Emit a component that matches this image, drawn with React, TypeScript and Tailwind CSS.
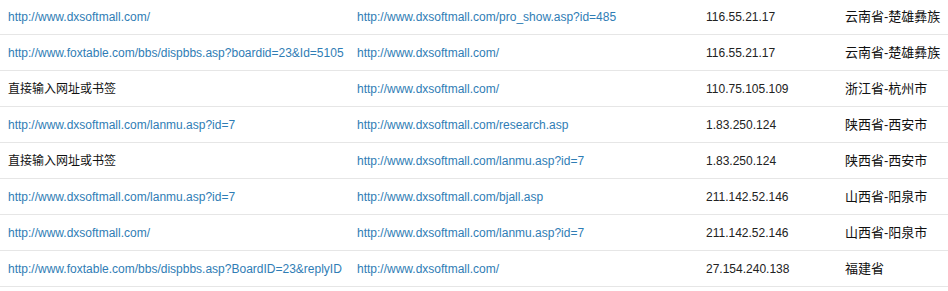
const rows = [
  { from: 'http://www.dxsoftmall.com/', to: 'http://www.dxsoftmall.com/pro_show.asp?id=485', ip: '116.55.21.17', area: '云南省-楚雄彝族' },
  { from: 'http://www.foxtable.com/bbs/dispbbs.asp?boardid=23&Id=5105', to: 'http://www.dxsoftmall.com/', ip: '116.55.21.17', area: '云南省-楚雄彝族' },
  { from: '直接输入网址或书签', to: 'http://www.dxsoftmall.com/', ip: '110.75.105.109', area: '浙江省-杭州市' },
  { from: 'http://www.dxsoftmall.com/lanmu.asp?id=7', to: 'http://www.dxsoftmall.com/research.asp', ip: '1.83.250.124', area: '陕西省-西安市' },
  { from: '直接输入网址或书签', to: 'http://www.dxsoftmall.com/lanmu.asp?id=7', ip: '1.83.250.124', area: '陕西省-西安市' },
  { from: 'http://www.dxsoftmall.com/lanmu.asp?id=7', to: 'http://www.dxsoftmall.com/bjall.asp', ip: '211.142.52.146', area: '山西省-阳泉市' },
  { from: 'http://www.dxsoftmall.com/', to: 'http://www.dxsoftmall.com/lanmu.asp?id=7', ip: '211.142.52.146', area: '山西省-阳泉市' },
  { from: 'http://www.foxtable.com/bbs/dispbbs.asp?BoardID=23&replyID', to: 'http://www.dxsoftmall.com/', ip: '27.154.240.138', area: '福建省' },
];

function Cell({ text }: { text: string }) {
  const isLink = text.startsWith('http');
  return isLink ? (
    <a className="text-[#2f7db5] whitespace-nowrap">{text}</a>
  ) : (
    <span className="text-[#111] whitespace-nowrap">{text}</span>
  );
}

export default function App() {
  return (
    <div className="w-[948px] h-[291px] overflow-hidden bg-white font-['Liberation_Sans','Noto_Sans_CJK_SC',sans-serif] text-[12px]">
      <div className="-mt-px">
        {rows.map((r, i) => (
          <div key={i} className="flex items-center h-[36px] border-b border-[#e6e6e6]">
            <div className="w-[357px] pl-[8px] overflow-hidden">
              <Cell text={r.from} />
            </div>
            <div className="w-[349px] overflow-hidden">
              <Cell text={r.to} />
            </div>
            <div className="w-[139px] text-[#222]">{r.ip}</div>
            <div className="flex-1 text-[#111] text-[13px] whitespace-nowrap">{r.area}</div>
          </div>
        ))}
      </div>
    </div>
  );
}
